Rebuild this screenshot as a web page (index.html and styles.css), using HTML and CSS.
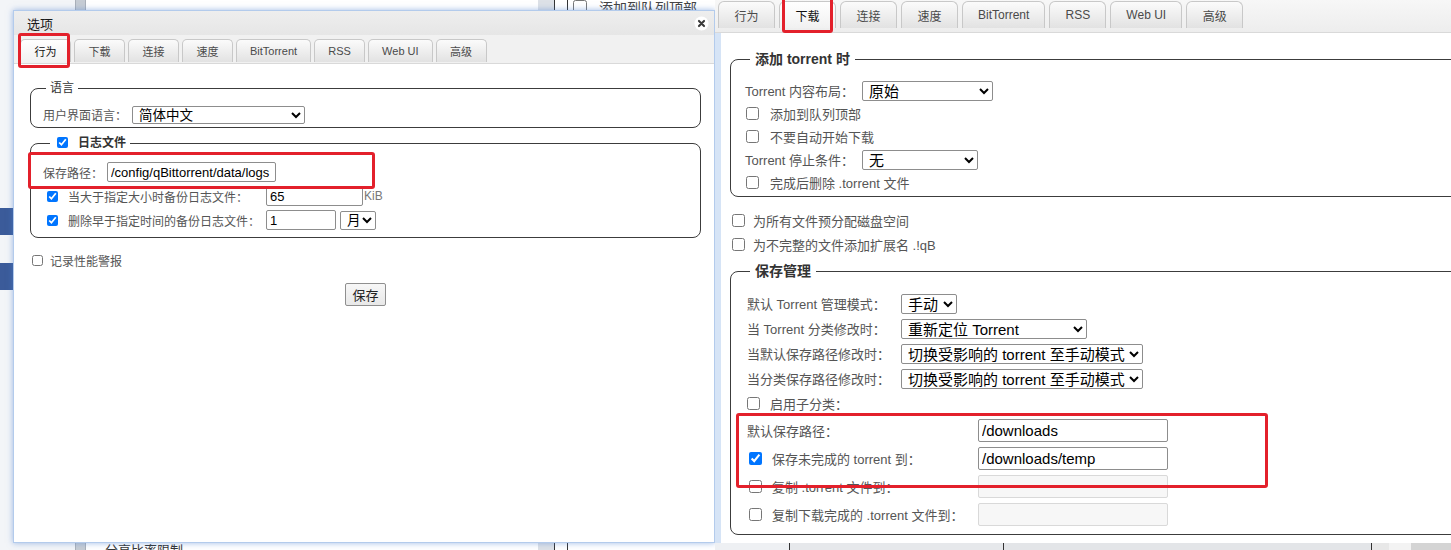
FILE: index.html
```html
<!DOCTYPE html>
<html lang="zh-CN">
<head>
    <meta charset="UTF-8">
    <title>qBittorrent 选项</title>
    <link rel="stylesheet" href="styles.css">
</head>
<body>
<div class="screen">

    <!-- 左边：行为 选项卡 -->
    <section class="shot shot-left">
        <div class="bg-page">
            <div class="bg-nav">
                <div class="bg-nav-item"></div>
                <div class="bg-nav-item"></div>
            </div>
            <div class="bg-scroll"></div>
            <div class="bg-list">分享比率限制</div>
            <div class="bg-gap"></div>
            <div class="bg-col"></div>
            <div class="bg-opts">
                <label class="bg-opt"><input type="checkbox">添加到队列顶部</label>
            </div>
        </div>

        <div class="dialog">
            <div class="dialog-title">
                <span>选项</span>
                <svg class="close" viewBox="0 0 16 16">
                    <circle cx="8" cy="8" r="7.5" fill="#fff"/>
                    <path d="M5.3 5.3l5.4 5.4M10.7 5.3l-5.4 5.4" stroke="#3a3a3a" stroke-width="2.2" stroke-linecap="round"/>
                </svg>
            </div>
            <div class="tabs tabs-small">
                <span class="tab active">行为</span>
                <span class="tab">下载</span>
                <span class="tab">连接</span>
                <span class="tab">速度</span>
                <span class="tab">BitTorrent</span>
                <span class="tab">RSS</span>
                <span class="tab">Web UI</span>
                <span class="tab">高级</span>
            </div>
            <div class="dialog-body">
                <fieldset class="box lang-box">
                    <legend>语言</legend>
                    <div class="row">
                        <span class="lbl w-lang">用户界面语言：</span>
                        <select class="sel-lang"><option>简体中文</option></select>
                    </div>
                </fieldset>

                <fieldset class="box log-box">
                    <legend><input type="checkbox" checked><span>日志文件</span></legend>
                    <div class="row">
                        <span class="lbl w-path">保存路径：</span>
                        <input class="txt w-logpath" type="text" value="/config/qBittorrent/data/logs">
                    </div>
                    <div class="row">
                        <input type="checkbox" checked>
                        <span class="lbl w-backup">当大于指定大小时备份日志文件：</span>
                        <input class="txt w-size" type="text" value="65">
                        <span class="unit">KiB</span>
                    </div>
                    <div class="row">
                        <input type="checkbox" checked>
                        <span class="lbl w-backup">删除早于指定时间的备份日志文件：</span>
                        <input class="txt w-age" type="text" value="1">
                        <select class="sel-unit"><option>月</option></select>
                    </div>
                </fieldset>

                <div class="row perf">
                    <input type="checkbox">
                    <span class="lbl">记录性能警报</span>
                </div>

                <div class="actions"><button>保存</button></div>
            </div>
        </div>

        <div class="mark mark-tab-left"></div>
        <div class="mark mark-logpath"></div>
    </section>

    <!-- 右边：下载 选项卡 -->
    <section class="shot shot-right">
        <div class="pane">
            <div class="tabs tabs-big">
                <span class="tab">行为</span>
                <span class="tab active">下载</span>
                <span class="tab">连接</span>
                <span class="tab">速度</span>
                <span class="tab">BitTorrent</span>
                <span class="tab">RSS</span>
                <span class="tab">Web UI</span>
                <span class="tab">高级</span>
            </div>
            <div class="pane-body">
                <fieldset class="box add-box">
                    <legend>添加 torrent 时</legend>
                    <div class="row">
                        <span class="lbl w-add">Torrent 内容布局：</span>
                        <select class="sel-layout"><option>原始</option></select>
                    </div>
                    <div class="row chk">
                        <input type="checkbox"><span class="lbl">添加到队列顶部</span>
                    </div>
                    <div class="row chk">
                        <input type="checkbox"><span class="lbl">不要自动开始下载</span>
                    </div>
                    <div class="row">
                        <span class="lbl w-add">Torrent 停止条件：</span>
                        <select class="sel-stop"><option>无</option></select>
                    </div>
                    <div class="row chk">
                        <input type="checkbox"><span class="lbl">完成后删除 .torrent 文件</span>
                    </div>
                </fieldset>

                <div class="row loose first">
                    <input type="checkbox"><span class="lbl">为所有文件预分配磁盘空间</span>
                </div>
                <div class="row loose">
                    <input type="checkbox"><span class="lbl">为不完整的文件添加扩展名 .!qB</span>
                </div>

                <fieldset class="box save-box">
                    <legend>保存管理</legend>
                    <div class="row sel-row">
                        <span class="lbl w-save">默认 Torrent 管理模式：</span>
                        <select class="sel-mode"><option>手动</option></select>
                    </div>
                    <div class="row sel-row">
                        <span class="lbl w-save">当 Torrent 分类修改时：</span>
                        <select class="sel-cat"><option>重新定位 Torrent</option></select>
                    </div>
                    <div class="row sel-row">
                        <span class="lbl w-save">当默认保存路径修改时：</span>
                        <select class="sel-switch"><option>切换受影响的 torrent 至手动模式</option></select>
                    </div>
                    <div class="row sel-row">
                        <span class="lbl w-save">当分类保存路径修改时：</span>
                        <select class="sel-switch"><option>切换受影响的 torrent 至手动模式</option></select>
                    </div>
                    <div class="row sub-row">
                        <input type="checkbox"><span class="lbl">启用子分类：</span>
                    </div>
                    <div class="path-row">
                        <span class="lbl">默认保存路径：</span>
                        <input class="txt" type="text" value="/downloads">
                    </div>
                    <div class="path-row">
                        <span class="path-lbl"><input type="checkbox" checked><span class="lbl">保存未完成的 torrent 到：</span></span>
                        <input class="txt" type="text" value="/downloads/temp">
                    </div>
                    <div class="path-row">
                        <span class="path-lbl"><input type="checkbox"><span class="lbl">复制 .torrent 文件到：</span></span>
                        <input class="txt" type="text" disabled>
                    </div>
                    <div class="path-row">
                        <span class="path-lbl"><input type="checkbox"><span class="lbl">复制下载完成的 .torrent 文件到：</span></span>
                        <input class="txt" type="text" disabled>
                    </div>
                </fieldset>
            </div>
        </div>
        <div class="bg-bottom">
            <span class="bb-a"></span>
            <span class="bb-b"></span>
            <span class="bb-c"></span>
            <span class="bb-d"></span>
            <span class="bb-e"></span>
            <span class="bb-f"></span>
        </div>

        <div class="mark mark-tab-right"></div>
        <div class="mark mark-paths"></div>
    </section>

</div>
</body>
</html>
```

FILE: styles.css
```css
* {
    box-sizing: border-box;
}

body {
    margin: 0;
    font-family: "Liberation Sans", "Noto Sans CJK SC", sans-serif;
    color: #333;
    background: #fff;
}

.screen {
    display: flex;
    width: 1451px;
    height: 550px;
    overflow: hidden;
}

.shot {
    position: relative;
    height: 550px;
    overflow: hidden;
}

.shot-left {
    width: 715px;
    flex-shrink: 0;
    background: #f2f4f7;
}

.shot-right {
    flex: 1;
    background: #e4e6ea;
}

/* 对话框后面的页面 */
.bg-page {
    display: flex;
    height: 100%;
}

.bg-nav {
    width: 75px;
    padding-top: 208px;
    background: #f3f5f8;
}

.bg-nav-item {
    height: 27px;
    margin-bottom: 28px;
    background: #3b5b9a;
}

.bg-scroll {
    width: 11px;
    background: #c6ccd4;
    border-left: 1px solid #aab0b9;
    border-right: 1px solid #aab0b9;
}

.bg-list {
    width: 452px;
    padding: 543px 0 0 19px;
    background: #fff;
    font-size: 13px;
    line-height: 16px;
    white-space: nowrap;
}

.bg-gap {
    width: 16px;
    background: #dde1e7;
}

.bg-col {
    width: 14px;
    background: #fff;
    border-left: 1px solid #333;
    border-right: 1px solid #333;
}

.bg-opts {
    flex: 1;
    padding-left: 5px;
    background: #fff;
}

.bg-opt {
    display: flex;
    align-items: center;
    gap: 12px;
    margin-top: -3px;
    font-size: 14px;
    color: #444;
}

.bg-opt input {
    width: 14px;
    height: 14px;
    margin: 0;
}

/* 对话框 */
.dialog {
    position: absolute;
    left: 13px;
    top: 10px;
    width: 702px;
    height: 533px;
    background: #fff;
    border: 1px solid #b3cbec;
    box-shadow: 0 0 6px rgba(80, 130, 210, 0.55);
}

.dialog-title {
    height: 24px;
    display: flex;
    align-items: center;
    justify-content: space-between;
    padding: 0 5px 0 13px;
    background: linear-gradient(#eeeeee, #e6e6e6);
    font-size: 13px;
    color: #1a1a1a;
}

.close {
    width: 15px;
    height: 15px;
}

.tabs {
    display: flex;
    align-items: flex-start;
    border-bottom: 1px solid #d9d9d9;
}

.tab {
    display: flex;
    align-items: center;
    justify-content: center;
    border: 1px solid #c8c8c8;
    border-bottom: 0;
    border-radius: 5px 5px 0 0;
    background: linear-gradient(#fbfbfb, #e2e2e2);
    color: #4a4a4a;
    white-space: nowrap;
}

.tab.active {
    background: linear-gradient(#ffffff, #f1f1f1);
    color: #111;
}

.tabs-small {
    height: 29px;
    padding: 4px 0 0 6px;
    gap: 3px;
    background: #f1f1f1;
    font-size: 11px;
}

.tabs-small .tab {
    height: 23px;
    min-width: 51px;
    padding: 0 13px;
}

.tabs-big {
    height: 33px;
    padding: 1px 0 0 3px;
    gap: 4px;
    background: linear-gradient(#f7f7f7, #ededed);
    font-size: 12px;
}

.tabs-big .tab {
    height: 27px;
    min-width: 57px;
    padding: 0 15px;
    border-radius: 6px 6px 0 0;
}

.dialog-body {
    padding: 16px 13px 0 16px;
    font-size: 12px;
}

/* 分组框 */
.box {
    margin: 0;
    min-width: 0;
    border: 1px solid #3c3c3c;
    border-radius: 8px;
}

.box legend {
    padding: 0 4px;
    color: #333;
}

.row {
    display: flex;
    align-items: center;
}

.lbl {
    color: #555;
    white-space: nowrap;
}

input[type="checkbox"] {
    margin: 0;
    flex-shrink: 0;
}

.txt {
    border: 1px solid #8d8d8d;
    border-radius: 2px;
    padding: 0 3px;
    font-family: inherit;
    color: #000;
    background: #fff;
}

.txt:disabled {
    background: #f7f7f7;
    border-color: #d9d9d9;
}

select {
    font-family: inherit;
    color: #000;
    background: #fff;
    border: 1px solid #8d8d8d;
    border-radius: 2px;
    padding: 0 0 0 2px;
}

/* 左边 */
.lang-box {
    padding: 8px 0 2px 12px;
}

.lang-box legend {
    margin-left: 3px;
    font-size: 12px;
    line-height: 16px;
}

.lang-box .row {
    height: 21px;
}

.w-lang {
    width: 89px;
}

.sel-lang {
    width: 173px;
    height: 18px;
    font-size: 13.5px;
}

.log-box {
    margin-top: 7px;
    padding: 9px 0 5px 12px;
}

.log-box legend {
    margin-left: 7px;
    font-size: 12px;
    line-height: 16px;
    font-weight: bold;
}

.log-box legend input {
    width: 11px;
    height: 11px;
    margin: 0 10px 0 3px;
    vertical-align: -1px;
}

.log-box .row {
    height: 24px;
}

.log-box .row input[type="checkbox"] {
    width: 11px;
    height: 11px;
    margin: 0 10px 0 4px;
}

.dialog .txt {
    height: 20px;
    font-size: 13px;
    padding: 0 2px 0 3px;
}

.w-path {
    width: 64px;
}

.w-backup {
    width: 198px;
}

.w-logpath {
    width: 169px;
}

.w-size {
    width: 97px;
}

.w-age {
    width: 70px;
}

.sel-unit {
    width: 36px;
    height: 19px;
    margin-left: 4px;
    font-size: 13.5px;
}

.unit {
    margin-left: 1px;
    color: #777;
}

.perf {
    height: 24px;
    margin-top: 10px;
}

.perf input[type="checkbox"] {
    width: 11px;
    height: 11px;
    margin: 0 7px 0 2px;
}

.actions {
    display: flex;
    justify-content: center;
    margin-top: 11px;
}

.actions button {
    height: 23px;
    padding: 0 6px;
    font-family: inherit;
    font-size: 13px;
    color: #222;
    background: linear-gradient(#f7f7f7, #e8e8e8);
    border: 1px solid #8f8f8f;
    border-radius: 2px;
}

/* 右边 */
.pane {
    height: 543px;
    background: #fff;
    overflow: hidden;
    box-shadow: 0 1px 3px rgba(0, 0, 0, 0.25);
}

.pane-body {
    width: 800px;
    height: 510px;
    padding: 17px 0 0 9px;
    border-left: 6px solid #d6e4f6;
    font-size: 13px;
}

.pane .box legend {
    padding: 0 5px;
    font-size: 14px;
    line-height: 18px;
    font-weight: bold;
}

.pane input[type="checkbox"] {
    width: 13px;
    height: 13px;
}

.pane select {
    height: 20px;
    font-size: 15px;
}

.add-box {
    padding: 11px 0 2px 14px;
}

.add-box legend {
    margin-left: 5px;
}

.add-box .row {
    height: 23px;
}

.add-box .chk input {
    margin: 0 11px 0 1px;
}

.w-add {
    width: 117px;
}

.sel-layout {
    width: 131px;
}

.sel-stop {
    width: 116px;
}

.loose {
    height: 24px;
}

.loose.first {
    margin-top: 11px;
}

.loose input {
    margin: 0 8px 0 2px;
}

.save-box {
    margin-top: 6px;
    padding: 11px 0 6px 16px;
}

.save-box legend {
    margin-left: 3px;
}

.sel-row {
    height: 25px;
}

.w-save {
    width: 154px;
}

.sel-mode {
    width: 56px;
}

.sel-cat {
    width: 186px;
}

.sel-switch {
    width: 242px;
}

.sub-row {
    height: 25px;
}

.sub-row input {
    margin: 0 10px 0 0;
}

.path-row {
    display: grid;
    grid-template-columns: 231px 190px;
    align-items: center;
    height: 28px;
}

.path-lbl {
    display: flex;
    align-items: center;
}

.path-lbl input {
    margin: 0 10px 0 2px;
}

.path-row .txt {
    height: 23px;
    font-size: 15px;
}

.bg-bottom {
    display: flex;
    height: 7px;
}

.bg-bottom span {
    height: 100%;
}

.bb-a {
    width: 75px;
    background: #eef0f3;
    border-right: 1px solid #333;
}

.bb-b {
    width: 214px;
    background: #e6e8eb;
    border-right: 1px solid #333;
}

.bb-c {
    width: 368px;
    background: #e3e5e8;
    border-right: 1px solid #333;
}

.bb-d {
    width: 17px;
    background: #e8e8e8;
}

.bb-e {
    width: 22px;
    background: #f3f3f3;
}

.bb-f {
    flex: 1;
    background: #d4d4d4;
}

/* 红色标注框 */
.mark {
    position: absolute;
    border: 3px solid #e3202b;
    border-radius: 3px;
}

.mark-tab-left {
    left: 18px;
    top: 33px;
    width: 52px;
    height: 35px;
}

.mark-logpath {
    left: 28px;
    top: 152px;
    width: 347px;
    height: 37px;
}

.mark-tab-right {
    left: 67px;
    top: -4px;
    width: 51px;
    height: 37px;
}

.mark-paths {
    left: 21px;
    top: 413px;
    width: 532px;
    height: 75px;
}
```
